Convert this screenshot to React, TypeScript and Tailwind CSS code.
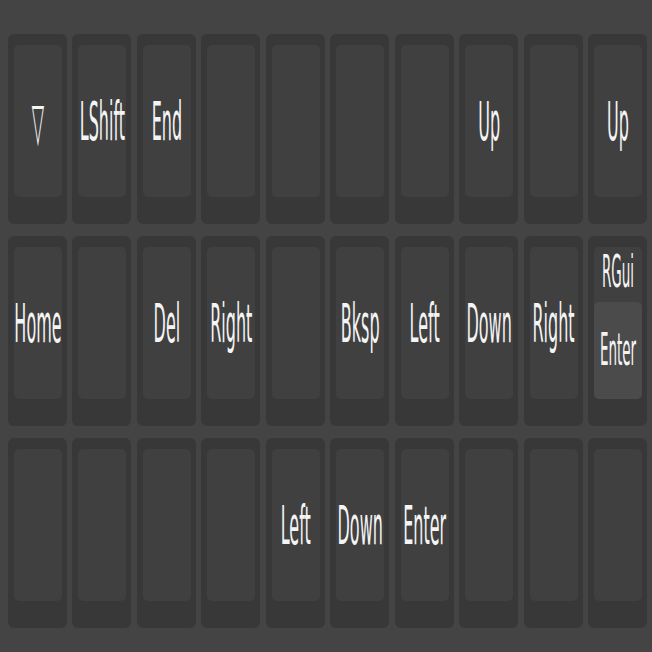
import React from "react";

type K = string | { hold: string; tap: string } | null;

const rows: K[][] = [
  ["▽", "LShift", "End", null, null, null, null, "Up", null, "Up"],
  ["Home", null, "Del", "Right", null, "Bksp", "Left", "Down", "Right", { hold: "RGui", tap: "Enter" }],
  [null, null, null, null, "Left", "Down", "Enter", null, null, null],
];

function Label({ text, small, shift }: { text: string; small?: boolean; shift?: string }) {
  return (
    <span
      className={
        "inline-block whitespace-nowrap leading-none text-[#f4f4f4] scale-y-[3.3] " +
        (small ? "text-[13.5px] " : "text-[16px] ") +
        (shift ?? "translate-y-[2px]")
      }
    >
      {text}
    </span>
  );
}

function Key({ k }: { k: K }) {
  return (
    <div className="rounded-[6px] bg-[#383838] pt-[11px] pb-[27px] pl-[6px] pr-[5px] flex">
      {k && typeof k === "object" ? (
        <div className="flex-1 rounded-[5px] bg-[#404040] flex flex-col">
          <div className="h-[55px] flex items-center justify-center">
            <Label text={k.hold} small shift="translate-y-[-2px]" />
          </div>
          <div className="flex-1 rounded-[5px] bg-[#4b4b4b] flex items-center justify-center">
            <Label text={k.tap} small shift="translate-y-[0px]" />
          </div>
        </div>
      ) : (
        <div className="flex-1 rounded-[5px] bg-[#404040] flex items-center justify-center">
          {k ? <Label text={k} /> : null}
        </div>
      )}
    </div>
  );
}

export default function App() {
  return (
    <div
      className="w-[652px] h-[652px] bg-[#444444] pt-[34px] pl-[8px] pr-[5px] pb-[24px] grid grid-rows-3 gap-y-[12px]"
      style={{ fontFamily: '"DejaVu Sans", Verdana, sans-serif' }}
    >
      {rows.map((r, i) => (
        <div key={i} className="grid grid-cols-10 gap-x-[5.5px]">
          {r.map((k, j) => (
            <Key key={j} k={k} />
          ))}
        </div>
      ))}
    </div>
  );
}
